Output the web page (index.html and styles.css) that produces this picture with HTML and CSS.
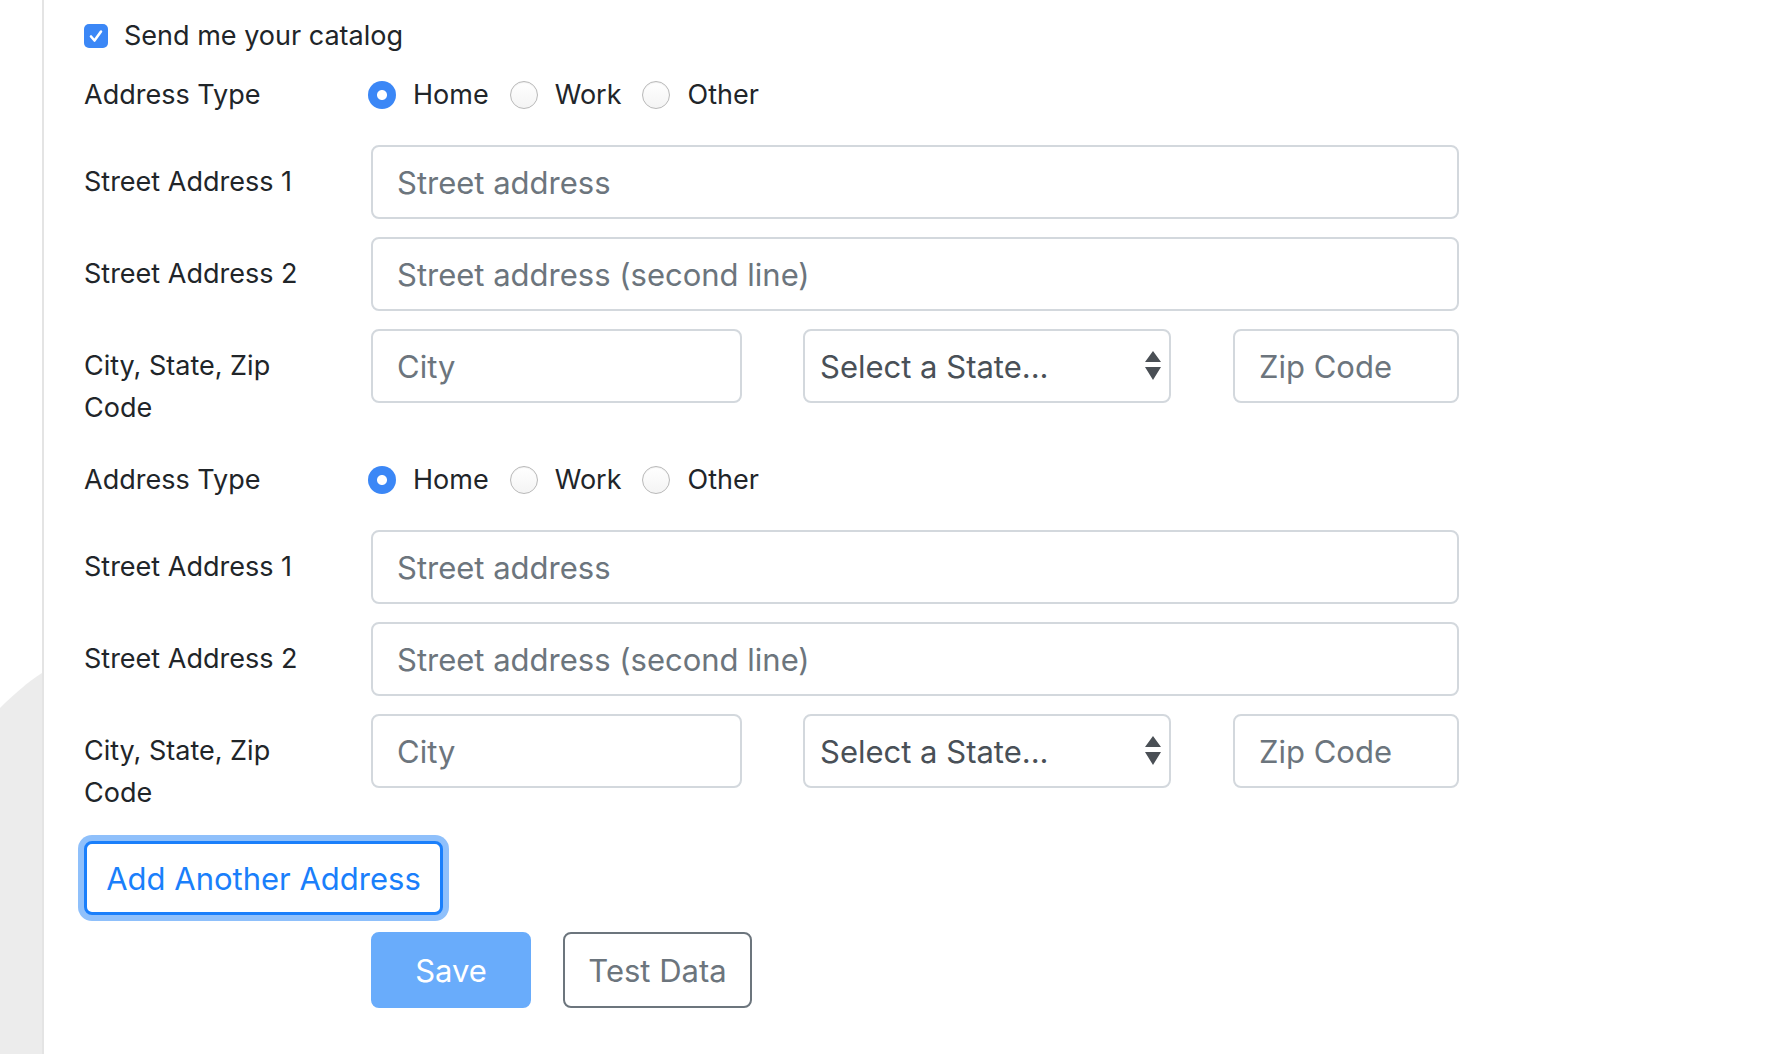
FILE: index.html
```html
<!DOCTYPE html>
<html>
<head>
<meta charset="utf-8">
<link rel="stylesheet" href="styles.css">
</head>
<body>
<div class="sidebar">
  <svg class="blob" width="42" height="1054" viewBox="0 0 42 1054" preserveAspectRatio="none"><path d="M0 708 C14 694 28 682 42 673 L42 1054 L0 1054 Z" fill="#ececec"/></svg>
</div>
<main class="main">
  <div class="form">
    <div class="row check-row">
      <span class="checkbox"><svg width="24" height="24" viewBox="0 0 24 24"><path d="M7 12.5 L10.5 16.5 L17 7.5" fill="none" stroke="#fff" stroke-width="2.6" stroke-linecap="round" stroke-linejoin="round"/></svg></span>
      <span class="check-text">Send me your catalog</span>
    </div>

    <div class="row radio-row">
      <div class="label">Address Type</div>
      <div class="radios">
        <span class="radio on"></span><span class="rtext">Home</span>
        <span class="radio"></span><span class="rtext">Work</span>
        <span class="radio"></span><span class="rtext">Other</span>
      </div>
    </div>
    <div class="row">
      <div class="label">Street Address 1</div>
      <div class="input full"><span class="ph">Street address</span></div>
    </div>
    <div class="row">
      <div class="label">Street Address 2</div>
      <div class="input full"><span class="ph">Street address (second line)</span></div>
    </div>
    <div class="row">
      <div class="label two">City, State, Zip Code</div>
      <div class="csz">
        <div class="input city"><span class="ph">City</span></div>
        <div class="select"><span class="sel-text">Select a State...</span><svg class="arrows" width="16" height="30" viewBox="0 0 16 30"><path d="M8 0 L16 11 L0 11 Z M0 16 L16 16 L8 29 Z" fill="#4a4f55"/></svg></div>
        <div class="input zip"><span class="ph">Zip Code</span></div>
      </div>
    </div>

    <div class="row radio-row">
      <div class="label">Address Type</div>
      <div class="radios">
        <span class="radio on"></span><span class="rtext">Home</span>
        <span class="radio"></span><span class="rtext">Work</span>
        <span class="radio"></span><span class="rtext">Other</span>
      </div>
    </div>
    <div class="row">
      <div class="label">Street Address 1</div>
      <div class="input full"><span class="ph">Street address</span></div>
    </div>
    <div class="row">
      <div class="label">Street Address 2</div>
      <div class="input full"><span class="ph">Street address (second line)</span></div>
    </div>
    <div class="row">
      <div class="label two">City, State, Zip Code</div>
      <div class="csz">
        <div class="input city"><span class="ph">City</span></div>
        <div class="select"><span class="sel-text">Select a State...</span><svg class="arrows" width="16" height="30" viewBox="0 0 16 30"><path d="M8 0 L16 11 L0 11 Z M0 16 L16 16 L8 29 Z" fill="#4a4f55"/></svg></div>
        <div class="input zip"><span class="ph">Zip Code</span></div>
      </div>
    </div>
  </div>

  <div class="add-wrap">
    <button class="btn btn-add">Add Another Address</button>
  </div>
  <div class="actions">
    <button class="btn btn-save">Save</button>
    <button class="btn btn-test">Test Data</button>
  </div>
</main>
</body>
</html>
```
FILE: styles.css
```css
html, body {
  margin: 0;
  padding: 0;
  background: #fff;
}
body {
  display: flex;
  height: 1054px;
  overflow: hidden;
  font-family: Inter, "Liberation Sans", sans-serif;
  color: #212529;
}
.sidebar {
  width: 42px;
  flex: none;
  border-right: 2px solid #e4e4e4;
  display: flex;
}
.blob { display: block; }
.main {
  flex: 1;
  padding-left: 40px;
  padding-top: 24px;
}
.form {
  display: flex;
  flex-direction: column;
  gap: 18px;
}
.row {
  display: flex;
  align-items: flex-start;
}
.label {
  width: 287px;
  flex: none;
  font-size: 27px;
  line-height: 42px;
  padding-top: 16px;
  box-sizing: border-box;
}
.label.two {
  width: 200px;
  margin-right: 87px;
  padding-top: 16px;
  padding-bottom: 1px;
}
.check-row {
  align-items: center;
  height: 24px;
  margin-bottom: -3px;
}
.checkbox {
  width: 24px;
  height: 24px;
  border-radius: 5px;
  background: #3b87f6;
  display: inline-flex;
  margin-right: 16px;
}
.check-text {
  font-size: 27px;
  line-height: 42px;
}
.radio-row {
  height: 64px;
  align-items: center;
}
.radio-row .label { padding-top: 0; }
.radios {
  display: flex;
  align-items: center;
  margin-left: -3px;
  font-size: 27px;
}
.radio {
  width: 28px;
  height: 28px;
  border-radius: 50%;
  box-sizing: border-box;
  border: 1.5px solid #b9b9b9;
  background: linear-gradient(#fff, #f4f4f4);
  box-shadow: inset 0 1px 1px rgba(0,0,0,0.06);
  flex: none;
}
.radio.on {
  border: none;
  background: radial-gradient(circle, #fff 0 4.5px, #3b87f6 5.5px);
  box-shadow: none;
}
.rtext {
  margin-left: 17px;
  margin-right: 21px;
  line-height: 42px;
}
.input, .select {
  height: 74px;
  box-sizing: border-box;
  border: 2px solid #d3d8dd;
  border-radius: 8px;
  display: flex;
  align-items: center;
  font-size: 31px;
}
.input { padding-left: 24px; }
.full { width: 1088px; }
.csz {
  display: flex;
  gap: 61px;
}
.city { width: 371px; }
.select {
  width: 368px;
  padding-left: 15px;
  padding-right: 8px;
  justify-content: space-between;
  margin-right: 1px;
}
.zip { width: 226px; }
.ph { color: #6c757d; }
.sel-text { color: #495057; }
.add-wrap {
  margin-top: 26px;
}
.btn {
  font-family: Inter, "Liberation Sans", sans-serif;
  font-size: 31px;
  height: 74px;
  border-radius: 8px;
  box-sizing: border-box;
  background: #fff;
  cursor: pointer;
  padding: 0;
  white-space: nowrap;
}
.btn-add {
  width: 359px;
  border: 3px solid #1a7ffb;
  color: #1a7ffb;
  box-shadow: 0 0 0 6px #8fc0fb;
}
.actions {
  display: flex;
  gap: 32px;
  margin-top: 17px;
  padding-left: 287px;
}
.btn-save {
  width: 160px;
  height: 76px;
  background: #69acfb;
  border: 2px solid #69acfb;
  color: #fff;
}
.btn-test {
  width: 189px;
  height: 76px;
  border: 2px solid #6c757d;
  color: #6c757d;
}
```
